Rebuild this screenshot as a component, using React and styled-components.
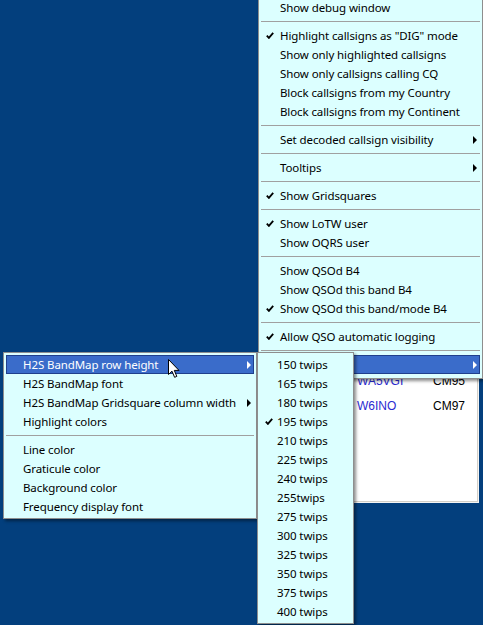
import React from "react";
import styled, { createGlobalStyle } from "styled-components";

const GlobalStyle = createGlobalStyle`
  html, body {
    margin: 0;
    padding: 0;
    background: #033f7d;
    overflow: hidden;
  }
`;

const Desktop = styled.div`
  position: relative;
  width: 483px;
  height: 625px;
  overflow: hidden;
  background: #033f7d;
  font-family: "Noto Sans", "Segoe UI", sans-serif;
  font-size: 11.5px;
  letter-spacing: -0.1px;
  color: #000;
`;

const ListPanel = styled.div`
  position: absolute;
  left: 348px;
  top: 368px;
  width: 131px;
  height: 135px;
  box-sizing: border-box;
  background: #fff;
  border: 1px solid;
  border-color: #a0a0a0 #f4f4f4 #f4f4f4 #a0a0a0;
  box-shadow: inset 1px 1px 0 #696969, inset -1px -1px 0 #d4d0c8;
  padding: 0 0 0 8px;
  font-family: "Liberation Sans", Arial, sans-serif;
  font-size: 12px;
  letter-spacing: 0;
`;

const ListRow = styled.div`
  display: grid;
  grid-template-columns: 76px 1fr;
  height: 25px;
  line-height: 25px;
`;

const Call = styled.span`
  color: #2b2bd1;
`;

const Grid = styled.span`
  color: #000;
`;

const Menu = styled.div`
  position: absolute;
  left: ${(p) => p.$x}px;
  top: ${(p) => p.$y}px;
  width: ${(p) => p.$w}px;
  box-sizing: border-box;
  background: #dcffff;
  border: 1px solid #8e8e8e;
  padding: 2px 2px ${(p) => p.$bottom || 2}px;
  box-shadow: 2px 2px 3px rgba(0, 0, 0, 0.45);
  z-index: ${(p) => p.$z};
`;

const Item = styled.div`
  display: flex;
  align-items: center;
  height: 19px;
  line-height: 19px;
  white-space: nowrap;
  box-sizing: border-box;
  color: ${(p) => (p.$active ? "#fff" : "#000")};
  background: ${(p) => (p.$active ? "#3a6cca" : "transparent")};
  box-shadow: ${(p) => (p.$active ? "inset 0 0 0 1px #1f3f8c" : "none")};
`;

const Gutter = styled.span`
  flex: 0 0 ${(p) => p.$w}px;
  display: flex;
  align-items: center;
  padding-left: 5px;
  box-sizing: border-box;
`;

const Label = styled.span`
  flex: 1;
`;

const Arrow = styled.span`
  width: 0;
  height: 0;
  margin-right: 3px;
  border-left: 4px solid ${(p) => (p.$active ? "#fff" : "#000")};
  border-top: 4px solid transparent;
  border-bottom: 4px solid transparent;
`;

const Separator = styled.div`
  height: 9px;
  display: flex;
  align-items: center;
  &::after {
    content: "";
    flex: 1;
    height: 1px;
    background: #a0a0a0;
  }
`;

const Pointer = styled.svg`
  position: absolute;
  left: 168px;
  top: 359px;
  z-index: 10;
`;

const Check = () => (
  <svg width="8" height="7" viewBox="0 0 8 7">
    <path d="M0.8 3.6 L2.9 5.9 L7.2 0.8" fill="none" stroke="#000" strokeWidth="1.8" />
  </svg>
);

const mainItems = [
  { label: "Show debug window" },
  "sep",
  { label: 'Highlight callsigns as "DIG" mode', checked: true },
  { label: "Show only highlighted callsigns" },
  { label: "Show only callsigns calling CQ" },
  { label: "Block callsigns from my Country" },
  { label: "Block callsigns from my Continent" },
  "sep",
  { label: "Set decoded callsign visibility", sub: true },
  "sep",
  { label: "Tooltips", sub: true },
  "sep",
  { label: "Show Gridsquares", checked: true },
  "sep",
  { label: "Show LoTW user", checked: true },
  { label: "Show OQRS user" },
  "sep",
  { label: "Show QSOd B4" },
  { label: "Show QSOd this band B4" },
  { label: "Show QSOd this band/mode B4", checked: true },
  "sep",
  { label: "Allow QSO automatic logging", checked: true },
  "sep",
  { label: "", sub: true, active: true },
];

const bandMapItems = [
  { label: "H2S BandMap row height", sub: true, active: true },
  { label: "H2S BandMap font" },
  { label: "H2S BandMap Gridsquare column width", sub: true },
  { label: "Highlight colors" },
  "sep",
  { label: "Line color" },
  { label: "Graticule color" },
  { label: "Background color" },
  { label: "Frequency display font" },
];

const twipItems = [
  "150 twips",
  "165 twips",
  "180 twips",
  "195 twips",
  "210 twips",
  "225 twips",
  "240 twips",
  "255twips",
  "275 twips",
  "300 twips",
  "325 twips",
  "350 twips",
  "375 twips",
  "400 twips",
].map((label) => ({ label, checked: label === "195 twips" }));

const MenuList = ({ items, gutter }) =>
  items.map((it, i) =>
    it === "sep" ? (
      <Separator key={i} />
    ) : (
      <Item key={i} $active={it.active}>
        <Gutter $w={gutter}>{it.checked && <Check />}</Gutter>
        <Label>{it.label}</Label>
        {it.sub && <Arrow $active={it.active} />}
      </Item>
    )
  );

export default function App() {
  return (
    <Desktop>
      <GlobalStyle />
      <ListPanel>
        <ListRow>
          <Call>WA5VGI</Call>
          <Grid>CM95</Grid>
        </ListRow>
        <ListRow>
          <Call>W6INO</Call>
          <Grid>CM97</Grid>
        </ListRow>
      </ListPanel>

      <Menu $x={258} $y={-5} $w={225} $z={1} $bottom={4}>
        <MenuList items={mainItems} gutter={19} />
      </Menu>

      <Menu $x={3} $y={352} $w={254} $z={2}>
        <MenuList items={bandMapItems} gutter={17} />
      </Menu>

      <Menu $x={257} $y={352} $w={97} $z={3}>
        <MenuList items={twipItems} gutter={17} />
      </Menu>

      <Pointer width="12" height="19" viewBox="0 0 12 19">
        <path
          d="M0.5 0.5 L0.5 15.5 L4 12.2 L6.6 18.3 L8.8 17.4 L6.3 11.4 L11 11.4 Z"
          fill="#fff"
          stroke="#000"
          strokeWidth="1"
          strokeLinejoin="miter"
        />
      </Pointer>
    </Desktop>
  );
}
